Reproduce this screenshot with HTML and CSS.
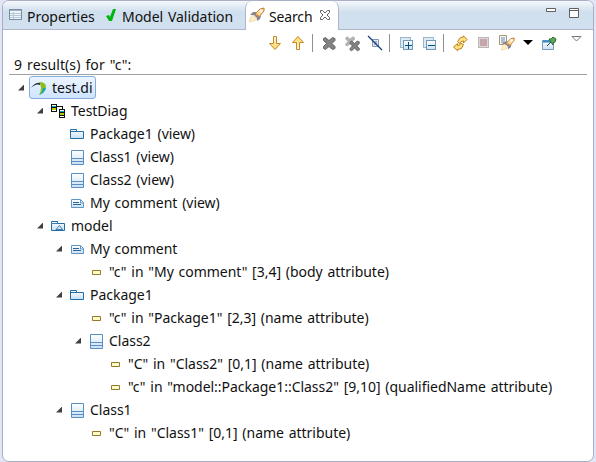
FILE: index.html
```
<!DOCTYPE html>
<html lang="en">
<head>
<meta charset="utf-8">
<title>Search</title>
<link rel="stylesheet" href="styles.css">
</head>
<body>
<svg class="defs" width="0" height="0">
  <defs>
    <linearGradient id="pale" x2="0" y2="1"><stop stop-color="#fff"/><stop offset="1" stop-color="#c9e0f4"/></linearGradient>
    <linearGradient id="gold" x2="0" y2="1"><stop stop-color="#fff8dc"/><stop offset="1" stop-color="#ffd45c"/></linearGradient>
    <symbol id="class" viewBox="0 0 16 16"><path d="M2.500 1.500h12v14h-12z" fill="url(#pale)" stroke="#5b8fc4"/><path d="M2 9.500h13M2 12.500h13" stroke="#5b8fc4"/></symbol>
    <symbol id="package" viewBox="0 0 16 16"><path d="M1.500 12.500v-9h6v2h7v7z" fill="url(#pale)" stroke="#226da5"/><path d="M1 5.500h7" stroke="#226da5"/></symbol>
    <symbol id="model" viewBox="0 0 16 16"><path d="M1.500 12.500v-9h6v2h7v7z" fill="url(#pale)" stroke="#226da5"/><path d="M1 5.500h7M6 11.500l3.500-4 3 4z" fill="none" stroke="#4380aa"/></symbol>
    <symbol id="comment" viewBox="0 0 16 16"><path d="M2.500 4.500h9l3 3v5h-12z" fill="url(#pale)" stroke="#6096c2"/><path d="M4 7.500h6M4 9.500h8" stroke="#2c6494"/><path d="M11.500 5v3h3" fill="none" stroke="#6096c2"/></symbol>
    <symbol id="match" viewBox="0 0 16 16"><path d="M4.500 6.500h8v4h-8z" fill="#fffbc5" stroke="#94782e"/></symbol>
    <symbol id="rocket" viewBox="0 0 16 16"><path d="M0 15l2-5 2-2 4 4-3 2z" fill="#fff1c5" stroke="#efc9a0" stroke-width=".7"/><path d="M1 8l3-3h4l4 4-1 3-3 2v-3L5 8z" fill="#85859a"/><path d="M6 7l5-5 4-1v3l-5 6z" fill="#ffdc99" stroke="#bd7c36"/><path d="M11 3l2 2" stroke="#fff" stroke-width="2"/><path d="M7.500 6.500l3 3" stroke="#d79a55"/></symbol>
    <symbol id="down" viewBox="0 0 16 16"><path d="M6.500 1.500h3v7h4l-5.500 6-5.500-6h4z" fill="url(#gold)" stroke="#c18a29"/></symbol>
    <symbol id="cross" viewBox="0 0 16 16"><path d="M2.500 3.500l2-1 3.500 3 3.500-3 2.500 1v2l-3 3 3 3v2l-2.500 1-3.500-3-3.500 3-2-1v-2l3-3-3-3z" fill="#828282" stroke="#686868"/></symbol>
  </defs>
</svg>
<main class="view">
  <header class="tabs">
    <div class="tab properties"><svg width="13" height="12" shape-rendering="crispEdges"><path d="M.5 .5h12v10h-12z" fill="#edf5fb" stroke="#788ca5"/><path d="M1 1.500h11" stroke="#a2b3c5"/><path d="M1 4.500h11M1 6.500h11M1 8.500h11M4.500 3v7" stroke="#b7c7d4"/></svg><span>Properties</span></div>
    <div class="tab validation"><svg width="12" height="14"><path d="M1 8l3-1 1 2 3-8h3L7 13H4z" fill="#00b50b"/></svg><span>Model Validation</span></div>
    <div class="tab active"><svg width="16" height="16"><use href="#rocket"/></svg><span>Search</span><svg class="close" width="12" height="12"><path d="M1.500 1.500h2L6 4l2.500-2.500h2v2L8 6l2.500 2.500v2h-2L6 8l-2.500 2.500h-2v-2L4 6 1.500 3.500z" fill="#fff" stroke="#646464"/></svg></div>
    <div class="window-tools"><svg width="10" height="4"><path d="M.5 .5h9v3h-9z" fill="#fff" stroke="#606060"/></svg><svg width="10" height="10"><path d="M.5 .5h9v9h-9zM0 2.500h10" fill="#fff" stroke="#606060"/></svg></div>
  </header>
  <nav class="toolbar">
    <svg class="tool"><use href="#down"/></svg>
    <svg class="tool up"><use href="#down"/></svg>
    <i class="separator"></i>
    <svg class="tool"><use href="#cross"/></svg>
    <svg class="tool"><use href="#cross" x="0" y="0" width="12" height="12" opacity=".6"/><use href="#cross" x="4" y="4" width="13" height="13"/></svg>
    <svg class="tool"><path d="M5.500 4.500h6v7h-6z" fill="#e2edf5" stroke="#8195b0"/><path d="M7 7h3M7 9h3" stroke="#61809c"/><path d="M1 1l14 14" stroke="#163c81" stroke-width="1.300"/></svg>
    <i class="separator"></i>
    <svg class="tool boxes" shape-rendering="crispEdges"><path d="M2.500 2.500h10v10h-10z" fill="#dcebf3" stroke="#99b8cf"/><path d="M5.500 5.500h9v9h-9z" fill="url(#pale)" stroke="#7399b6"/><path d="M7 10.500h7M10.500 7v7" stroke="#075080"/></svg>
    <svg class="tool boxes" shape-rendering="crispEdges"><path d="M2.500 2.500h10v10h-10z" fill="#dcebf3" stroke="#99b8cf"/><path d="M5.500 5.500h9v9h-9z" fill="url(#pale)" stroke="#7399b6"/><path d="M7 10.500h7" stroke="#075080"/></svg>
    <i class="separator"></i>
    <svg class="tool refresh"><path d="M5.500 6.500l3-4 3-.5V.8l3.500 3.700-3.500 3.500V6L9 6.500 7.500 8.500z" fill="#ffe389" stroke="#bb8119"/><path d="M11.500 9.500l-2 4-4 1v1.200L1.500 12l4-3.500v2l2-.5 1-2z" fill="#ffdf80" stroke="#bb8119"/></svg>
    <svg class="tool stop" shape-rendering="crispEdges"><path d="M2.500 2.500h10v10h-10z" fill="#e3d5d7" stroke="#bbb7b7"/><path d="M4 4h7v7H4z" fill="#c4a7aa"/></svg>
    <svg class="tool history"><path d="M.5 .5h7v9h-7z" fill="#f4f8ff" stroke="#a39c62"/><path d="M2 3h4M2 5h4M2 7h3" stroke="#6d82b7"/><use href="#rocket" x="2" y="2" width="14" height="14"/></svg>
    <svg class="dropdown" width="10" height="6"><path d="M0 0h10L5 5z" fill="#000"/></svg>
    <svg class="tool pin"><path d="M1.500 5.500h11v9h-11z" fill="url(#pale)" stroke="#7b9bb9"/><path d="M2 6.500h7" stroke="#318ac6" stroke-width="2"/><path d="M6 11l4-4" stroke="#333"/><path d="M8 4l2 0 2-2 3 2-1 3-2 1v2z" fill="#62a456" stroke="#267336"/></svg>
    <svg class="menu" width="11" height="6"><path d="M1 .5h9L5.500 5z" fill="#fff" stroke="#777"/></svg>
  </nav>
  <p class="summary"><span>9 result(s) for "c":</span></p>
  <ul class="tree">
    <li class="row l0"><i class="arrow"></i><div class="selected"><svg class="icon"><path d="M0 8q4-6 10-5l-1 2q-4-2-9 3z" fill="#243440"/><path d="M8 2q7 0 7 5-1 6-7 8 2-3 2-7 0-3-2-6z" fill="#8abd20"/><path d="M15 8q-1 5-7 7 4-3 4-7z" fill="#15a8bc"/></svg><span>test.di</span></div></li>
    <li class="row l1"><i class="arrow"></i><svg class="icon" shape-rendering="crispEdges"><path d="M1.500 1.500h5v7h-5zM9.500 6.500h5v8h-5z" fill="#fff" stroke="#111"/><path d="M2 3.500h4" stroke="#00a7bd"/><path d="M2 6h4" stroke="#b7cd00" stroke-width="2"/><path d="M10 8.500h4" stroke="#00a7bd"/><path d="M10 11h4" stroke="#b7cd00" stroke-width="2"/><path d="M1 4.500h6M9 9.500h6M9 12.500h6M7 3.500h5v3" fill="none" stroke="#111"/></svg><span>TestDiag</span></li>
    <li class="row l2"><svg class="icon"><use href="#package"/></svg><span>Package1 (view)</span></li>
    <li class="row l2"><svg class="icon"><use href="#class"/></svg><span>Class1 (view)</span></li>
    <li class="row l2"><svg class="icon"><use href="#class"/></svg><span>Class2 (view)</span></li>
    <li class="row l2"><svg class="icon"><use href="#comment"/></svg><span>My comment (view)</span></li>
    <li class="row l1"><i class="arrow"></i><svg class="icon"><use href="#model"/></svg><span>model</span></li>
    <li class="row l2"><i class="arrow"></i><svg class="icon"><use href="#comment"/></svg><span>My comment</span></li>
    <li class="row l3"><svg class="icon"><use href="#match"/></svg><span>"c" in "My comment" [3,4] (body attribute)</span></li>
    <li class="row l2"><i class="arrow"></i><svg class="icon"><use href="#package"/></svg><span>Package1</span></li>
    <li class="row l3"><svg class="icon"><use href="#match"/></svg><span>"c" in "Package1" [2,3] (name attribute)</span></li>
    <li class="row l3"><i class="arrow"></i><svg class="icon"><use href="#class"/></svg><span>Class2</span></li>
    <li class="row l4"><svg class="icon"><use href="#match"/></svg><span>"C" in "Class2" [0,1] (name attribute)</span></li>
    <li class="row l4"><svg class="icon"><use href="#match"/></svg><span>"c" in "model::Package1::Class2" [9,10] (qualifiedName attribute)</span></li>
    <li class="row l2"><i class="arrow"></i><svg class="icon"><use href="#class"/></svg><span>Class1</span></li>
    <li class="row l3"><svg class="icon"><use href="#match"/></svg><span>"C" in "Class1" [0,1] (name attribute)</span></li>
  </ul>
</main>
</body>
</html>
```
FILE: styles.css
```
* { box-sizing: border-box; }
html, body { margin: 0; height: 100%; }
body { background: #e0e4f4; color: #111; font: 14px/23px "Noto Sans", sans-serif; letter-spacing: -.03px; word-spacing: 1.2px; overflow: hidden; padding-left: 2px; padding-right: 2px; }
svg { display: block; flex: none; }
.defs { position: absolute; }
.view { height: 462px; border: 1px solid #a9afc7; border-radius: 7px; background: #fff; overflow: hidden; }
.tabs { height: 29px; display: flex; border-bottom: 1px solid #b0b5cc; background: linear-gradient(#f5f8fc, #cfdfed 40%, #d2e1ef); }
.tab { display: flex; align-items: center; white-space: nowrap; padding-bottom: 1px; }
.tab span { padding-top: 3px; }
.properties { width: 97px; padding-left: 6px; gap: 5px; }
.validation { width: 145px; padding-left: 5px; gap: 5px; }
.active { width: 94px; height: 29px; background: #fff; border: solid #b0b5cc; border-width: 0 1px; border-radius: 7px 7px 0 0; padding-left: 3px; gap: 4px; letter-spacing: -.15px; }
.close { margin-left: 3px; }
.window-tools { display: flex; gap: 13px; margin-left: auto; padding: 7px 14px 0 0; }
.toolbar { height: 24px; display: flex; align-items: center; gap: 7px; padding: 2px 0 0 264px; margin-bottom: 2px; }
.tool { width: 16px; height: 16px; overflow: visible; }
.up { transform: scaleY(-1); }
.separator { width: 1px; height: 18px; background: #909090; margin: 0 1px 0 -1px; }
.boxes { margin: -1px 0 0; }
.stop { margin-left: 1px; }
.dropdown { margin-left: 1px; }
.pin { margin-left: 1px; }
.menu { margin: -9px 0 0 7px; }
.summary { height: 19px; margin: 0 6px 1px 6px; border-bottom: 1px solid #a0a0a0; line-height: 18px; padding-left: 5px; letter-spacing: .1px; }
.tree { list-style: none; margin: 0; padding: 0; }
.row { height: 23px; display: flex; align-items: center; white-space: nowrap; }
.l0 { padding-left: 28px; }
.l1 { padding-left: 47px; }
.l2 { padding-left: 66px; }
.l3 { padding-left: 85px; }
.l4 { padding-left: 104px; }
.icon { width: 16px; height: 16px; margin-right: 5px; }
.arrow { width: 6px; height: 6px; margin: 0 7px 0 -13px; background: #404040; clip-path: polygon(100% 0, 100% 100%, 0 100%); }
.selected { display: flex; align-items: center; height: 23px; width: 67px; margin-left: -2px; padding-left: 1px; border: 1px solid #84acdd; border-radius: 3px; background: linear-gradient(#edf5ff, #cfe4ff); }
```
